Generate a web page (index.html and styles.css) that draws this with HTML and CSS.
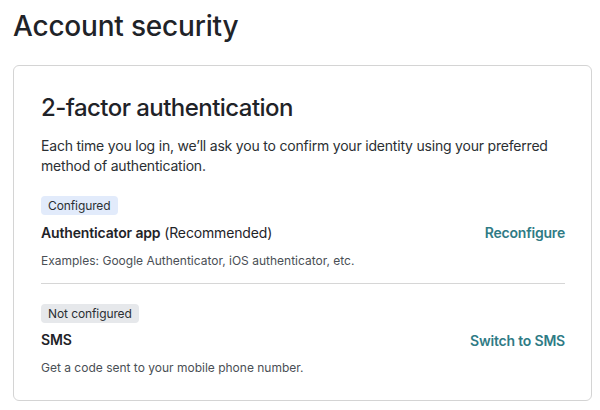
FILE: index.html
```html
<!DOCTYPE html>
<html>
<head>
<meta charset="utf-8">
<link rel="stylesheet" href="styles.css">
</head>
<body>
<main class="page">
  <h1 class="title">Account security</h1>
  <section class="card">
    <h2 class="card-title">2-factor authentication</h2>
    <p class="intro">Each time you log in, we’ll ask you to confirm your identity using your preferred method of authentication.</p>
    <div class="method">
      <span class="badge badge-on">Configured</span>
      <div class="method-row">
        <div class="method-name"><strong>Authenticator app</strong> (Recommended)</div>
        <a class="action">Reconfigure</a>
      </div>
      <div class="method-desc">Examples: Google Authenticator, iOS authenticator, etc.</div>
    </div>
    <hr class="divider">
    <div class="method">
      <span class="badge badge-off">Not configured</span>
      <div class="method-row">
        <div class="method-name"><strong>SMS</strong></div>
        <a class="action">Switch to SMS</a>
      </div>
      <div class="method-desc">Get a code sent to your mobile phone number.</div>
    </div>
  </section>
</main>
</body>
</html>
```
FILE: styles.css
```css
* { box-sizing: border-box; }
body {
  margin: 0;
  font-family: Inter, "Noto Sans", sans-serif;
  color: #1f2328;
  background: #fff;
}
.page {
  padding: 8px 8px 0 13px;
}
.title {
  margin: 0 0 21px;
  font-size: 28px;
  font-weight: 500;
  line-height: 36px;
  letter-spacing: -0.2px;
}
.card {
  width: 579px;
  border: 1px solid #d4d4d4;
  border-radius: 6px;
  padding: 27px 26px 23px 27px;
}
.card-title {
  margin: 0 0 13px;
  font-size: 24px;
  font-weight: 500;
  line-height: 30px;
  letter-spacing: -0.55px;
}
.intro {
  margin: 0 0 20px;
  font-size: 14px;
  line-height: 20px;
  letter-spacing: -0.2px;
  color: #2b2f33;
}
.method {
  display: flex;
  flex-direction: column;
}
.badge {
  align-self: flex-start;
  font-size: 12px;
  line-height: 18px;
  padding: 1px 7px 0;
  border-radius: 4px;
  letter-spacing: -0.1px;
  color: #2b2f33;
}
.badge-on { background: #e2ebfb; }
.badge-off { background: #e6e8eb; }
.method-row {
  display: flex;
  justify-content: space-between;
  align-items: center;
  margin-top: 7.5px;
}
.method-name {
  font-size: 14px;
  line-height: 20px;
  letter-spacing: -0.15px;
}
.method-name strong { font-weight: 600; }
.action {
  font-size: 14px;
  font-weight: 600;
  letter-spacing: -0.2px;
  color: #2f7b85;
}
.method-desc {
  margin-top: 9px;
  font-size: 12px;
  line-height: 18px;
  color: #4a4f55;
}
.divider {
  margin: 13px 0 20px;
  border: 0;
  border-top: 1px solid #d6d6d6;
}
```
